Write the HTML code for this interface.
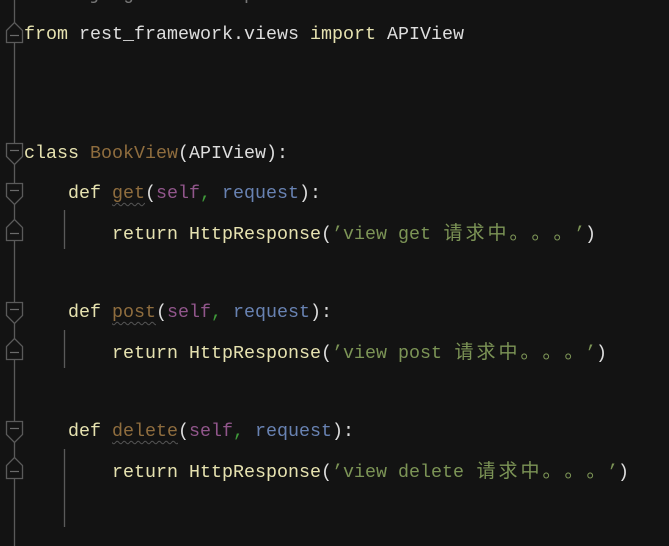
<!DOCTYPE html>
<html><head><meta charset="utf-8"><style>
html,body{margin:0;padding:0;background:#131313;width:669px;height:546px;overflow:hidden}
.l{position:absolute;left:24px;height:40px;line-height:40px;font-family:"Liberation Mono","Noto Sans CJK SC",monospace;font-size:18.33px;white-space:pre;color:#dedede}
.k{color:#e6e2b0}.c{color:#8f6d3e}.s{color:#91568b}.r{color:#6882b2}.g{color:#3f9a3a}.t{color:#7c9456}
.cj{font-family:"Noto Sans CJK SC",sans-serif;display:inline-block;width:22px;text-align:center;font-size:19px}
.u{text-decoration:underline wavy #555;text-underline-offset:4px;text-decoration-thickness:1px}
</style></head><body>
<svg width="669" height="546" style="position:absolute;left:0;top:0">
<g stroke="#5a5a5a" stroke-width="1.3" fill="#131313">
<line x1="14.5" y1="0" x2="14.5" y2="546"/>
<line x1="64.5" y1="210" x2="64.5" y2="249"/>
<line x1="64.5" y1="330" x2="64.5" y2="368"/>
<line x1="64.5" y1="449" x2="64.5" y2="527"/>
<path d="M6.5 42.5V30.5L14.5 22.5L22.5 30.5V42.5Z"/>
<path d="M6.5 143.5V156.5L14.5 164.5L22.5 156.5V143.5Z"/>
<path d="M6.5 183.5V196.5L14.5 204.5L22.5 196.5V183.5Z"/>
<path d="M6.5 240.5V227.5L14.5 219.5L22.5 227.5V240.5Z"/>
<path d="M6.5 302.5V315.5L14.5 323.5L22.5 315.5V302.5Z"/>
<path d="M6.5 359.5V346.5L14.5 338.5L22.5 346.5V359.5Z"/>
<path d="M6.5 421.5V434.5L14.5 442.5L22.5 434.5V421.5Z"/>
<path d="M6.5 478.5V465.5L14.5 457.5L22.5 465.5V478.5Z"/>
</g>
<g stroke="#6a6a6a" stroke-width="1.2">
<line x1="10" y1="35.5" x2="19" y2="35.5"/><line x1="10" y1="150.5" x2="19" y2="150.5"/>
<line x1="10" y1="190.5" x2="19" y2="190.5"/><line x1="10" y1="233.5" x2="19" y2="233.5"/>
<line x1="10" y1="309.5" x2="19" y2="309.5"/><line x1="10" y1="352.5" x2="19" y2="352.5"/>
<line x1="10" y1="428.5" x2="19" y2="428.5"/><line x1="10" y1="471.5" x2="19" y2="471.5"/>
</g></svg>
<div class="l" style="top:-25px;color:#777">from django.views import View</div>
<div class="l" style="top:15px"><span class="k">from</span> rest_framework.views <span class="k">import</span> APIView</div>
<div class="l" style="top:134px"><span class="k">class</span> <span class="c">BookView</span>(APIView):</div>
<div class="l" style="top:174px">    <span class="k">def</span> <span class="c u">get</span>(<span class="s">self</span><span class="g">,</span> <span class="r">request</span>):</div>
<div class="l" style="top:212px">        <span class="k">return</span> <span class="k">HttpResponse</span>(<span class="t">’view get <span class="cj">请</span><span class="cj">求</span><span class="cj">中</span><span class="cj">。</span><span class="cj">。</span><span class="cj">。</span>’</span>)</div>
<div class="l" style="top:293px">    <span class="k">def</span> <span class="c u">post</span>(<span class="s">self</span><span class="g">,</span> <span class="r">request</span>):</div>
<div class="l" style="top:331px">        <span class="k">return</span> <span class="k">HttpResponse</span>(<span class="t">’view post <span class="cj">请</span><span class="cj">求</span><span class="cj">中</span><span class="cj">。</span><span class="cj">。</span><span class="cj">。</span>’</span>)</div>
<div class="l" style="top:412px">    <span class="k">def</span> <span class="c u">delete</span>(<span class="s">self</span><span class="g">,</span> <span class="r">request</span>):</div>
<div class="l" style="top:450px">        <span class="k">return</span> <span class="k">HttpResponse</span>(<span class="t">’view delete <span class="cj">请</span><span class="cj">求</span><span class="cj">中</span><span class="cj">。</span><span class="cj">。</span><span class="cj">。</span>’</span>)</div>
</body></html>
